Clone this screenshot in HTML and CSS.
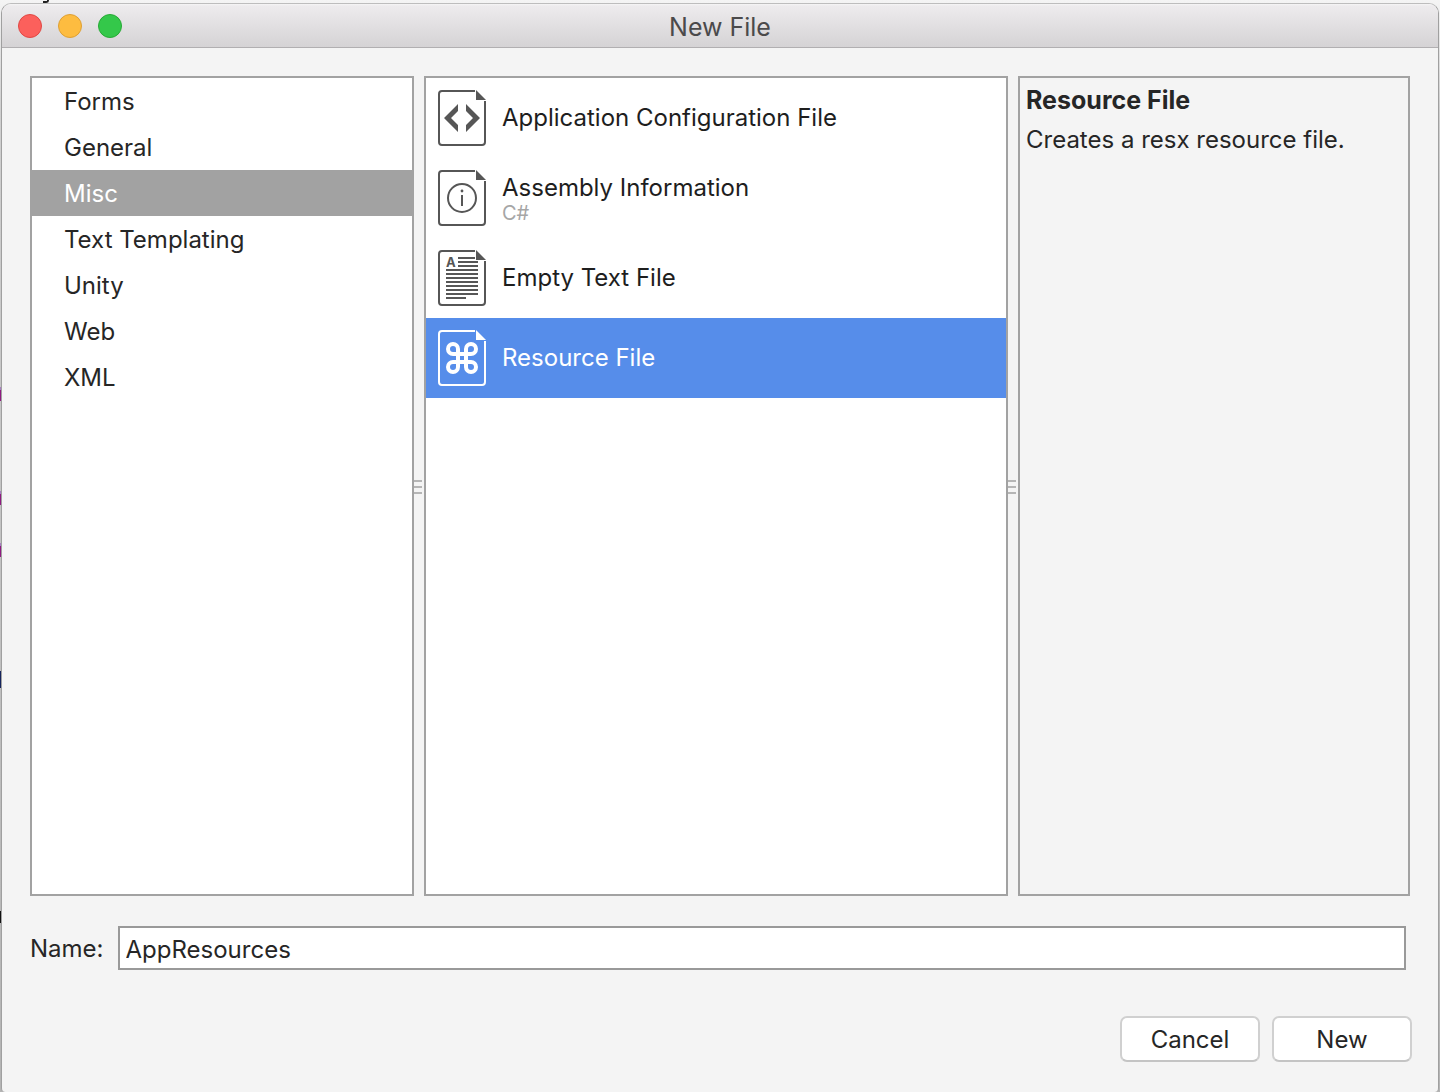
FILE: index.html
```html
<!DOCTYPE html>
<html lang="en">
<head>
<meta charset="utf-8">
<title>New File</title>
<link rel="stylesheet" href="styles.css">
</head>
<body>
<div class="backdrop" aria-hidden="true">
  <i class="mark tail"></i>
  <i class="mark keyword k1"></i>
  <i class="mark keyword k2"></i>
  <i class="mark keyword k3"></i>
  <i class="mark type"></i>
  <i class="mark plain"></i>
</div>
<form class="window" aria-labelledby="title">
  <header class="titlebar">
    <div class="lights">
      <button type="button" class="light close" aria-label="Close"></button>
      <button type="button" class="light minimize" aria-label="Minimize"></button>
      <button type="button" class="light maximize" aria-label="Zoom"></button>
    </div>
    <h1 class="title" id="title">New File</h1>
  </header>
  <main class="content">
    <div class="panes">
      <ul class="pane categories">
        <li><button type="button" class="category">Forms</button></li>
        <li><button type="button" class="category">General</button></li>
        <li><button type="button" class="category selected" aria-current="true">Misc</button></li>
        <li><button type="button" class="category">Text Templating</button></li>
        <li><button type="button" class="category">Unity</button></li>
        <li><button type="button" class="category">Web</button></li>
        <li><button type="button" class="category">XML</button></li>
      </ul>
      <div class="splitter"><i></i><i></i><i></i></div>
      <ul class="pane templates">
        <li><button type="button" class="template">
          <svg class="icon" viewBox="0 0 48 56" aria-hidden="true">
            <path class="line" d="M37 1H4a3 3 0 0 0-3 3v48a3 3 0 0 0 3 3h40a3 3 0 0 0 3-3V11"/>
            <path class="solid" d="M38 0v10h10z"/>
            <path class="solid" d="M20 14v7l-7 7 7 7v7L6 28zM28 14v7l7 7-7 7v7l14-14z"/>
          </svg>
          <span class="label">Application Configuration File</span>
        </button></li>
        <li><button type="button" class="template">
          <svg class="icon" viewBox="0 0 48 56" aria-hidden="true">
            <path class="line" d="M37 1H4a3 3 0 0 0-3 3v48a3 3 0 0 0 3 3h40a3 3 0 0 0 3-3V11"/>
            <path class="solid" d="M38 0v10h10z"/>
            <circle class="line" cx="24" cy="28" r="14"/>
            <path class="solid" d="M23 25h2v11h-2z"/>
            <circle class="solid" cx="24" cy="21" r="1.4"/>
          </svg>
          <span class="label">Assembly Information<small class="language">C#</small></span>
        </button></li>
        <li><button type="button" class="template">
          <svg class="icon" viewBox="0 0 48 56" aria-hidden="true">
            <path class="line" d="M37 1H4a3 3 0 0 0-3 3v48a3 3 0 0 0 3 3h40a3 3 0 0 0 3-3V11"/>
            <path class="solid" d="M38 0v10h10z"/>
            <text class="letter" x="8" y="17">A</text>
            <path class="line" d="M20 8h17M20 12h20M20 16h20M8 20h32M8 24h32M8 28h32M8 32h32M8 36h32M8 40h32M8 44h32M8 48h20"/>
          </svg>
          <span class="label">Empty Text File</span>
        </button></li>
        <li><button type="button" class="template selected" aria-current="true">
          <svg class="icon" viewBox="0 0 48 56" aria-hidden="true">
            <path class="line" d="M37 1H4a3 3 0 0 0-3 3v48a3 3 0 0 0 3 3h40a3 3 0 0 0 3-3V11"/>
            <path class="solid" d="M38 0v10h10z"/>
            <path class="line thick" d="M20 19v18a5 5 0 1 1-5-5h18a5 5 0 1 1-5 5V19a5 5 0 1 1 5 5H15a5 5 0 1 1 5-5z"/>
          </svg>
          <span class="label">Resource File</span>
        </button></li>
      </ul>
      <div class="splitter"><i></i><i></i><i></i></div>
      <section class="pane details">
        <h2 class="details-title">Resource File</h2>
        <p class="details-text">Creates a resx resource file.</p>
      </section>
    </div>
    <div class="name-row">
      <label class="name-label" for="name">Name:</label>
      <input id="name" class="name-input" type="text" value="AppResources">
    </div>
    <footer class="actions">
      <button type="button" class="action">Cancel</button>
      <button type="submit" class="action">New</button>
    </footer>
  </main>
</form>
</body>
</html>
```
FILE: styles.css
```css
* {
  box-sizing: border-box;
}

body {
  margin: 0;
  min-height: 100vh;
  display: flex;
  padding: 3px 1px 0;
  background: linear-gradient(#f4f4f4, #cfcfcf 10%, #b4b4b4);
  color: #262626;
  font: 24px/30px Inter, "Liberation Sans", sans-serif;
}

button,
input {
  font: inherit;
  color: inherit;
}

/* Slivers of the editor that show around the dialog */
.mark {
  position: absolute;
  left: 0;
  width: 2px;
}

.tail {
  left: 43px;
  top: 0;
  width: 6px;
  height: 3px;
  border: solid #222;
  border-width: 0 2px 2px 0;
  border-bottom-right-radius: 3px;
}

.keyword {
  height: 14px;
  background: linear-gradient(#a77fc0 3px, #8e1a80 3px);
}

.k1 { top: 387px; }
.k2 { top: 491px; }
.k3 { top: 543px; }

.type {
  top: 671px;
  height: 17px;
  background: #15245c;
}

.plain {
  top: 911px;
  height: 12px;
  background: #111;
}

.window {
  position: relative;
  flex: 1;
  display: flex;
  flex-direction: column;
  border: 1px solid #a0a0a0;
  border-top-color: #bdbdbd;
  border-bottom: 0;
  border-radius: 10px 10px 4px 4px;
  background: #f4f4f4;
  overflow: hidden;
}

.titlebar {
  display: grid;
  grid-template-columns: 1fr auto 1fr;
  align-items: center;
  height: 44px;
  padding: 0 16px;
  border-bottom: 1px solid #b1afb1;
  background: linear-gradient(#f6f5f6, #edebed 2px, #d5d3d5);
}

.lights {
  display: flex;
  gap: 16px;
}

.light {
  width: 24px;
  height: 24px;
  padding: 0;
  border: 1px solid;
  border-radius: 50%;
}

.close { background: #fc605c; border-color: #e04844; }
.minimize { background: #fdbc40; border-color: #dea034; }
.maximize { background: #34c84a; border-color: #27aa35; }

.title {
  margin: 0;
  padding-top: 2px;
  font-size: 25px;
  font-weight: 400;
  color: #4b4a4b;
}

.content {
  flex: 1;
  display: flex;
  flex-direction: column;
  padding: 28px 26px 30px 28px;
}

.panes {
  flex: 1;
  display: grid;
  grid-template-columns: 384fr 10px 584fr 10px 392fr;
  padding-right: 2px;
}

.pane {
  min-width: 0;
  margin: 0;
  padding: 0;
  border: 2px solid #a2a2a2;
  background: #fff;
  list-style: none;
}

.category,
.template {
  display: flex;
  align-items: center;
  width: 100%;
  border: 0;
  background: none;
  text-align: left;
}

.category {
  height: 46px;
  padding: 2px 32px 0;
}

.category.selected {
  background: #a2a2a2;
  color: #fff;
}

.template {
  height: 80px;
  gap: 16px;
  padding: 0 12px;
  color: #1e1e1e;
}

.template.selected {
  background: #568dea;
  color: #fff;
}

.icon {
  flex: none;
  width: 48px;
  height: 56px;
  color: #565656;
}

.selected .icon {
  color: #fff;
}

.line {
  fill: none;
  stroke: currentColor;
  stroke-width: 2;
}

.thick {
  stroke-width: 4;
}

.solid {
  fill: currentColor;
}

.letter {
  fill: currentColor;
  font-size: 13px;
  font-weight: 700;
}

.language {
  display: block;
  font-size: 20px;
  line-height: 20px;
  color: #a6a6a6;
}

.splitter {
  display: flex;
  flex-direction: column;
  justify-content: center;
  gap: 4px;
  padding-top: 2px;
  cursor: col-resize;
}

.splitter i {
  width: 8px;
  height: 2px;
  background: #b5b5b5;
}

.details {
  padding: 7px 6px;
  background: #f4f4f4;
}

.details-title {
  margin: 0 0 10px;
  font-size: 25px;
  font-weight: 700;
}

.details-text {
  margin: 0;
}

.name-row {
  display: flex;
  align-items: center;
  gap: 14px;
  margin: 30px 6px 46px 0;
}

.name-label {
  padding-top: 2px;
}

.name-input {
  flex: 1;
  min-width: 0;
  height: 44px;
  padding: 2px 6px 0;
  border: 2px solid #999;
  background: #fff;
  outline: 0;
}

.actions {
  display: flex;
  justify-content: flex-end;
  gap: 12px;
}

.action {
  width: 140px;
  height: 46px;
  padding: 2px 0 0;
  border: 2px solid #d0d0d0;
  border-bottom-color: #c4c4c4;
  border-radius: 7px;
  background: #fff;
}
```
